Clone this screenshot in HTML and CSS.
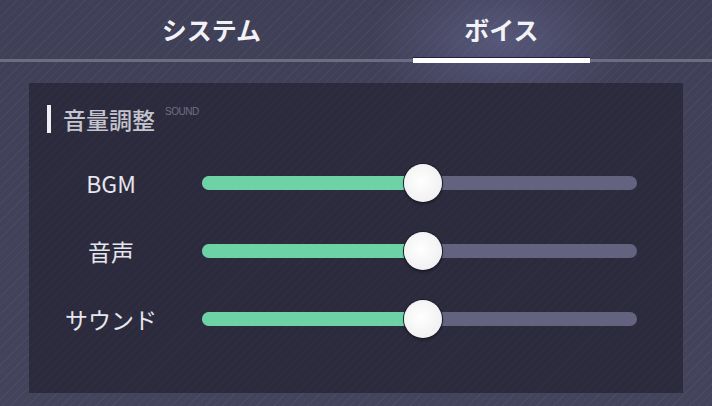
FILE: index.html
```html
<!DOCTYPE html>
<html lang="ja">
<head>
  <meta charset="UTF-8" />
  <title>設定 - ボイス</title>
  <link rel="stylesheet" href="styles.css">
</head>
<body>
  <div class="screen">
    <div class="tabs">
      <div class="tab">システム</div>
      <div class="tab active">ボイス</div>
    </div>

    <div class="panel">
      <h2 class="panel-title">音量調整<span class="sub">SOUND</span></h2>

      <div class="rows">
        <div class="row">
          <span class="label">BGM</span>
          <div class="slider">
            <div class="fill" style="width: 50.8%"></div>
            <div class="knob" style="left: 50.8%"></div>
          </div>
        </div>
        <div class="row">
          <span class="label">音声</span>
          <div class="slider">
            <div class="fill" style="width: 50.8%"></div>
            <div class="knob" style="left: 50.8%"></div>
          </div>
        </div>
        <div class="row">
          <span class="label">サウンド</span>
          <div class="slider">
            <div class="fill" style="width: 50.8%"></div>
            <div class="knob" style="left: 50.8%"></div>
          </div>
        </div>
      </div>
    </div>
  </div>
</body>
</html>
```

FILE: styles.css
```css
:root {
  --bg: #42425a;
  --panel: #2c2b3d;
  --line: #6c6c82;
  --track: #63637f;
  --fill: #6dd3a6;
  --text: #e6e6ee;
  --muted: #c4c4ce;
}

* {
  box-sizing: border-box;
  margin: 0;
  padding: 0;
}

body {
  width: 712px;
  height: 406px;
  overflow: hidden;
  font-family: "Noto Sans CJK JP", "Noto Sans", sans-serif;
  color: var(--text);
  background: var(--bg);
}

.screen {
  height: 406px;
  background:
    radial-gradient(ellipse 130px 80px at 500px 40px, rgba(140, 140, 200, 0.3), transparent),
    repeating-linear-gradient(135deg, rgba(255,255,255,0.035) 0 1px, transparent 1px 6px),
    linear-gradient(180deg, #3f3f57, #43435c);
}

/* Tabs */
.tabs {
  display: flex;
  gap: 113px;
  padding-left: 123px;
  height: 62px;
  border-bottom: 3px solid var(--line);
}

.tab {
  width: 177px;
  display: flex;
  align-items: center;
  justify-content: center;
  padding-bottom: 2px;
  font-size: 25px;
  font-weight: 700;
  color: #f2f2f6;
  position: relative;
}

.tab.active::after {
  content: "";
  position: absolute;
  left: 0;
  right: 0;
  bottom: -4px;
  height: 5px;
  background: #ffffff;
  border-top: 1px solid #20204a;
}

/* Panel */
.panel {
  margin: 21px 29px 0 29px;
  height: 310px;
  background: repeating-linear-gradient(135deg, rgba(255,255,255,0.02) 0 1px, transparent 1px 6px), var(--panel);
  padding: 22px 46px 0 0;
}

.panel-title {
  display: flex;
  align-items: flex-start;
  margin-left: 18px;
  height: 28px;
  padding-left: 12px;
  border-left: 4px solid #f0f0f4;
  font-size: 23px;
  font-weight: 500;
  line-height: 28px;
  color: var(--muted);
}

.panel-title .sub {
  font-family: "Liberation Sans", sans-serif;
  font-size: 10px;
  line-height: 10px;
  margin: 2px 0 0 10px;
  color: #6e6e84;
  letter-spacing: -0.5px;
}

.rows {
  margin-top: 16px;
}

.row {
  display: grid;
  grid-template-columns: 164px 1fr;
  column-gap: 9px;
  align-items: center;
  height: 68px;
}

.label {
  text-align: center;
  font-size: 23px;
  font-weight: 400;
  color: var(--text);
}

.slider {
  position: relative;
  height: 14px;
  border-radius: 7px;
  background: var(--track);
}

.fill {
  height: 100%;
  border-radius: 7px 0 0 7px;
  background: var(--fill);
}

.knob {
  position: absolute;
  top: 50%;
  width: 38px;
  height: 38px;
  margin: -19px 0 0 -19px;
  border-radius: 50%;
  background: radial-gradient(circle at 45% 45%, #ffffff, #f1f1f3 70%, #e4e4e8);
  box-shadow: 0 0 0 1px #1c1c2a, 0 2px 3px rgba(0,0,0,0.4);
}
```
